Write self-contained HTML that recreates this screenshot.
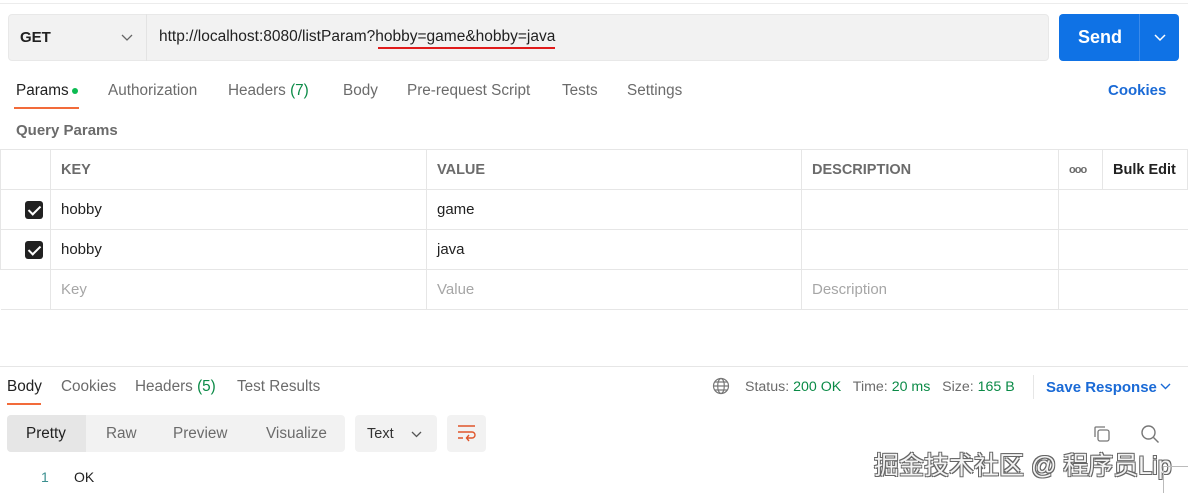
<!DOCTYPE html>
<html><head><meta charset="utf-8"><style>
body{margin:0;width:1188px;height:493px;background:#fff;font-family:"Liberation Sans",sans-serif;position:relative;overflow:hidden;color:#212121}
.a{position:absolute;white-space:nowrap}
.t{font-size:15.3px;color:#6b6b6b}
.tbl{position:absolute;left:0;top:149px;width:1188px;border-collapse:collapse}
.tbl td{border:1px solid #e6e6e6;height:39px;font-size:15px;padding:0 0 0 10px;color:#212121}
.tbl tr:first-child td{color:#6b6b6b;font-weight:bold;font-size:14.5px}
.tbl td.e{border-left:none;border-right:none}
.cb{width:18px;height:18px;background:#212121;border-radius:3px;margin-left:2px;position:relative}
.cb:after{content:"";position:absolute;left:6px;top:2px;width:5px;height:10px;border:solid #fff;border-width:0 2px 2px 0;transform:rotate(45deg)}
.ph{color:#a6a6a6!important}
</style></head><body>
<div class="a" style="left:0;top:3px;width:1188px;height:1px;background:#ececec"></div>
<div class="a" style="left:8px;top:14px;width:1041px;height:47px;background:#f2f2f2;border-radius:4px;border:1px solid #e8e8e8;box-sizing:border-box"></div>
<div class="a" style="left:146px;top:14px;width:1px;height:47px;background:#e3e3e3"></div>
<div class="a" style="left:20px;top:29px;font-size:15px;font-weight:bold;color:#212121">GET</div>
<svg class="a" style="left:121px;top:34px" width="12" height="8"><path d="M1 1l5 5 5-5" stroke="#666" fill="none" stroke-width="1.3"/></svg>
<div class="a" style="left:159px;top:28px;font-size:15.5px;color:#212121">http://localhost:8080/listParam?hobby=game&amp;hobby=java</div>
<div class="a" style="left:378px;top:47px;width:177px;height:2px;background:#e01b1b"></div>
<div class="a" style="left:1059px;top:14px;width:120px;height:47px;background:#0f72e5;border-radius:4px"></div>
<div class="a" style="left:1139px;top:14px;width:1px;height:47px;background:#3a8aea"></div>
<div class="a" style="left:1078px;top:27px;font-size:18px;font-weight:bold;color:#fff">Send</div>
<svg class="a" style="left:1154px;top:34px" width="12" height="8"><path d="M1 1l5 5 5-5" stroke="#fff" fill="none" stroke-width="1.5"/></svg>
<div class="a t" style="left:16px;top:82px;color:#212121">Params</div>
<div class="a" style="left:72px;top:88px;width:6px;height:6px;border-radius:3px;background:#0cbb52"></div>
<div class="a" style="left:14px;top:107px;width:65px;height:2px;background:#f26b3a"></div>
<div class="a t" style="left:108px;top:82px">Authorization</div>
<div class="a t" style="left:228px;top:82px">Headers <span style="color:#0a8a46">(7)</span></div>
<div class="a t" style="left:343px;top:82px">Body</div>
<div class="a t" style="left:407px;top:82px">Pre-request Script</div>
<div class="a t" style="left:562px;top:82px">Tests</div>
<div class="a t" style="left:627px;top:82px">Settings</div>
<div class="a" style="left:1108px;top:82px;font-size:15px;font-weight:bold;color:#1a6ad6">Cookies</div>
<div class="a" style="left:16px;top:122px;font-size:15px;font-weight:bold;color:#6b6b6b">Query Params</div>
<table class="tbl">
<tr><td style="width:39px"></td><td style="width:365px">KEY</td><td style="width:364px">VALUE</td><td style="width:246px">DESCRIPTION</td><td style="width:33px;font-size:11px;letter-spacing:-1px">ooo</td><td style="color:#212121">Bulk Edit</td></tr>
<tr><td style="padding-left:22px"><div class="cb"></div></td><td>hobby</td><td>game</td><td></td><td class="e" colspan="2"></td></tr>
<tr><td style="padding-left:22px"><div class="cb"></div></td><td>hobby</td><td>java</td><td></td><td class="e" colspan="2"></td></tr>
<tr><td style="border-left:none"></td><td class="ph">Key</td><td class="ph">Value</td><td class="ph">Description</td><td class="e" colspan="2"></td></tr>
</table>
<div class="a" style="left:0;top:366px;width:1188px;height:1px;background:#e6e6e6"></div>
<div class="a t" style="left:7px;top:378px;color:#212121">Body</div>
<div class="a" style="left:7px;top:403px;width:34px;height:2px;background:#f26b3a"></div>
<div class="a t" style="left:61px;top:378px">Cookies</div>
<div class="a t" style="left:135px;top:378px">Headers <span style="color:#0a8a46">(5)</span></div>
<div class="a t" style="left:237px;top:378px">Test Results</div>
<svg class="a" style="left:712px;top:377px" width="18" height="18" fill="none" stroke="#777" stroke-width="1.2"><circle cx="9" cy="9" r="7.5"/><ellipse cx="9" cy="9" rx="3.3" ry="7.5"/><path d="M1.5 9h15M3 5h12M3 13h12"/></svg>
<div class="a" style="left:745px;top:379px;font-size:14.2px;color:#6b6b6b">Status: <span style="color:#0a8a46">200 OK</span>&nbsp;&nbsp; Time: <span style="color:#0a8a46">20 ms</span>&nbsp;&nbsp; Size: <span style="color:#0a8a46">165 B</span></div>
<div class="a" style="left:1033px;top:375px;width:1px;height:24px;background:#e6e6e6"></div>
<div class="a" style="left:1046px;top:379px;font-size:15px;font-weight:bold;color:#1a6ad6">Save Response</div>
<svg class="a" style="left:1160px;top:383px" width="11" height="7"><path d="M1 1l4.5 4.5L10 1" stroke="#1a6ad6" fill="none" stroke-width="1.4"/></svg>
<div class="a" style="left:7px;top:415px;width:338px;height:37px;background:#f2f2f2;border-radius:4px"></div>
<div class="a" style="left:7px;top:415px;width:79px;height:37px;background:#e6e6e6;border-radius:4px 0 0 4px"></div>
<div class="a t" style="left:26px;top:425px;color:#212121">Pretty</div>
<div class="a t" style="left:106px;top:425px">Raw</div>
<div class="a t" style="left:173px;top:425px">Preview</div>
<div class="a t" style="left:266px;top:425px">Visualize</div>
<div class="a" style="left:355px;top:415px;width:82px;height:37px;background:#f2f2f2;border-radius:4px"></div>
<div class="a" style="left:367px;top:426px;font-size:14.5px;color:#333">Text</div>
<svg class="a" style="left:411px;top:431px" width="11" height="7"><path d="M1 1l4.5 4.5L10 1" stroke="#555" fill="none" stroke-width="1.3"/></svg>
<div class="a" style="left:447px;top:415px;width:39px;height:37px;background:#f2f2f2;border-radius:4px"></div>
<svg class="a" style="left:457px;top:424px" width="20" height="18" fill="none" stroke="#e0552a" stroke-width="1.4"><path d="M1 2h17M1 8h14a3 3 0 0 1 0 6h-5M12 11l-2.5 3 2.5 3M1 14h5"/></svg>
<svg class="a" style="left:1092px;top:424px" width="20" height="20" fill="none" stroke="#777" stroke-width="1.3"><rect x="6" y="6" width="11" height="11" rx="2"/><path d="M3 13V4a1 1 0 0 1 1-1h9"/></svg>
<svg class="a" style="left:1140px;top:424px" width="20" height="20" fill="none" stroke="#777" stroke-width="1.4"><circle cx="8.5" cy="8.5" r="6.5"/><path d="M13.5 13.5l5 5"/></svg>
<div class="a" style="left:41px;top:469px;font-size:14px;color:#3a8f8f">1</div>
<div class="a" style="left:74px;top:469px;font-size:14px;color:#212121">OK</div>
<div class="a" style="left:874px;top:446px;font-size:25px;color:#f4f4f4;font-family:'Liberation Sans','Noto Sans CJK SC',sans-serif;text-shadow:1px 1px 0 #666,-1px -1px 0 #666,1px -1px 0 #666,-1px 1px 0 #666">掘金技术社区 @ 程序员Lip</div>
<div class="a" style="left:1163px;top:466px;width:1px;height:27px;background:#bbb"></div>
<div class="a" style="left:1163px;top:466px;width:25px;height:1px;background:#bbb"></div>
</body></html>
